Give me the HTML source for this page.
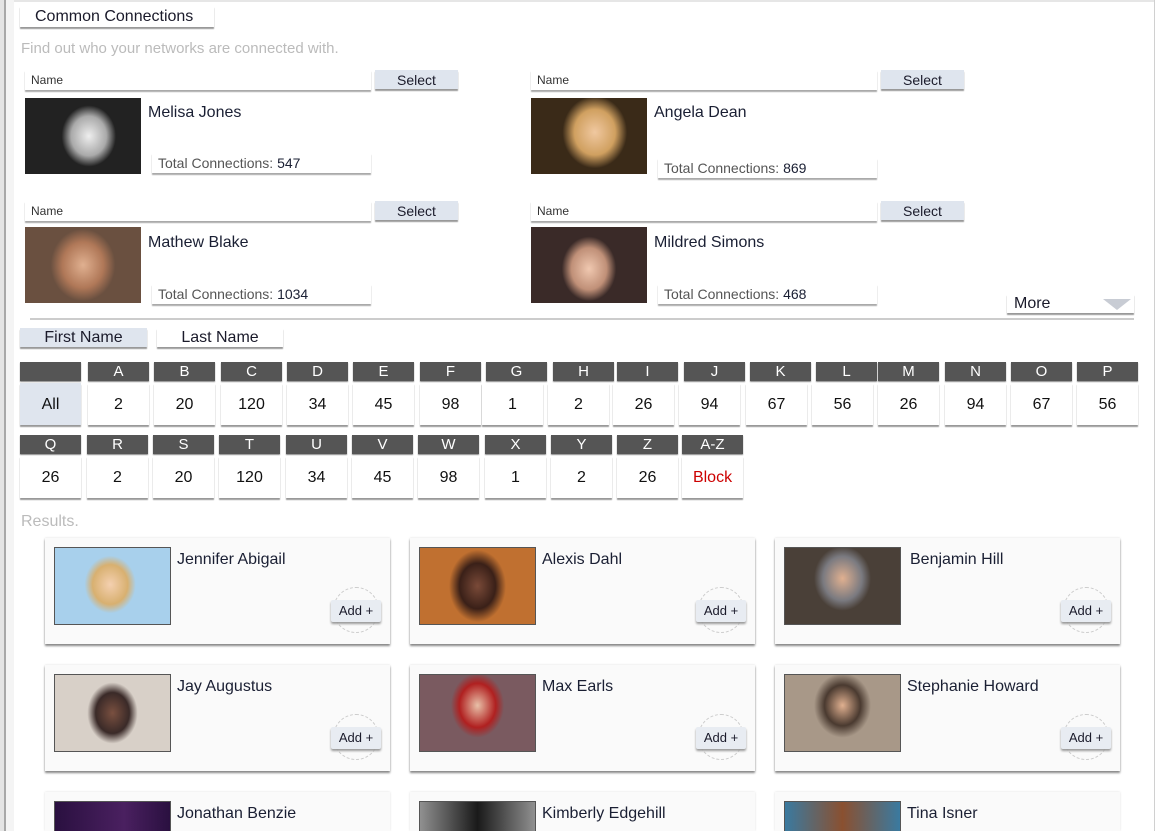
<!DOCTYPE html>
<html style="width:1158px;height:831px;overflow:hidden"><head><meta charset="utf-8"><style>
*{margin:0;padding:0;box-sizing:border-box}
body{width:1158px;height:831px;overflow:hidden;background:#fff;font-family:"Liberation Sans",Arial,sans-serif;position:relative;color:#1a1a2a}
.a{position:absolute}
.lb{left:0;top:0;width:6px;height:831px;background:#e4e4e4;border-right:2px solid #a8a8a8}
.lb2{left:6px;top:0;width:8px;height:831px;background:#f4f4f4}
.rb{left:1154px;top:0;width:1px;height:831px;background:#d0d0d0}
.tb{left:14px;top:0;width:1140px;height:2px;background:#e6e6e6}
.btn{position:absolute;background:#fff;box-shadow:0 2px 1px #999;font-size:16px;text-align:center}
.sel{background:#dfe5ee}
.inp{position:absolute;background:#fff;box-shadow:0 2px 1px #aaa;font-size:12px;padding-left:6px;line-height:20px;color:#333}
.nm{position:absolute;font-size:16px;color:#1a1f33}
.tc{position:absolute;background:#fff;box-shadow:0 2px 1px #aaa;font-size:14px;color:#555;padding-left:6px;line-height:20px}
.tc b{font-weight:normal;color:#1a1f33}
.ph{position:absolute;overflow:hidden}
.h{position:absolute;height:19px;background:#555;color:#fff;font-size:15px;text-align:center;line-height:20px;box-shadow:0 1px 1px #888}
.c{position:absolute;height:42px;background:#fff;font-size:16px;text-align:center;line-height:44px;box-shadow:0 2px 1px #999;color:#111}
.card{position:absolute;width:345px;height:106px;background:#fafafa;box-shadow:0 2px 2px #888, 0 0 2px #ddd;overflow:hidden}
.card.last{height:39px;box-shadow:0 0 2px #ddd}
.card .p{position:absolute;left:9px;top:9px;width:117px;height:78px;border:1px solid #555;overflow:hidden}
.card .n{position:absolute;left:132px;top:13px;font-size:16px;color:#1a1f33}
.add{position:absolute;left:286px;top:62px;width:50px;height:22px;background:#e8ecf2;font-size:13px;line-height:22px;text-align:center;box-shadow:0 2px 2px #999;border-radius:2px}
.ring{position:absolute;left:288px;top:49px;width:46px;height:46px;border-radius:50%;border:1px dashed #ccc}
</style></head><body>
<div class="a lb"></div><div class="a lb2"></div><div class="a rb"></div><div class="a tb"></div>

<div class="btn" style="left:20px;top:6px;width:194px;height:21px;line-height:22px;text-align:left;padding-left:15px">Common Connections</div>
<div class="a" style="left:21px;top:40px;font-size:15px;color:#bbb">Find out who your networks are connected with.</div>

<div class="inp" style="left:25px;top:70px;width:346px">Name</div>
<div class="btn sel" style="left:375px;top:70px;width:83px;height:19px;line-height:20px;font-size:14px">Select</div>
<div class="ph" style="left:25px;top:98px;width:116px;height:76px;background:radial-gradient(ellipse 32px 36px at 55% 50%,#eee,#aaa 55%,#222 85%)"></div>
<div class="nm" style="left:148px;top:104px">Melisa Jones</div>
<div class="tc" style="left:152px;top:153px;width:219px">Total Connections: <b>547</b></div>

<div class="inp" style="left:531px;top:70px;width:346px">Name</div>
<div class="btn sel" style="left:881px;top:70px;width:83px;height:19px;line-height:20px;font-size:14px">Select</div>
<div class="ph" style="left:531px;top:98px;width:116px;height:76px;background:radial-gradient(ellipse 34px 38px at 55% 45%,#f0c8a0,#d0a060 60%,#3a2a18 95%)"></div>
<div class="nm" style="left:654px;top:104px">Angela Dean</div>
<div class="tc" style="left:658px;top:158px;width:219px">Total Connections: <b>869</b></div>

<div class="inp" style="left:25px;top:201px;width:346px">Name</div>
<div class="btn sel" style="left:375px;top:201px;width:83px;height:19px;line-height:20px;font-size:14px">Select</div>
<div class="ph" style="left:25px;top:227px;width:116px;height:76px;background:radial-gradient(ellipse 34px 38px at 50% 50%,#e0b090,#b07858 60%,#6a5040 95%)"></div>
<div class="nm" style="left:148px;top:234px">Mathew Blake</div>
<div class="tc" style="left:152px;top:284px;width:219px">Total Connections: <b>1034</b></div>

<div class="inp" style="left:531px;top:201px;width:346px">Name</div>
<div class="btn sel" style="left:881px;top:201px;width:83px;height:19px;line-height:20px;font-size:14px">Select</div>
<div class="ph" style="left:531px;top:227px;width:116px;height:76px;background:radial-gradient(ellipse 32px 38px at 50% 55%,#f0c8b0,#c09078 55%,#3a2a28 85%)"></div>
<div class="nm" style="left:654px;top:234px">Mildred Simons</div>
<div class="tc" style="left:658px;top:284px;width:219px">Total Connections: <b>468</b></div>

<div class="btn" style="left:1007px;top:294px;width:127px;height:19px;line-height:20px;text-align:left;padding-left:7px">More
<svg class="a" style="left:96px;top:4px" width="28" height="12"><path d="M0 1 L28 1 L14 12 Z" fill="#c8ccd4"/></svg></div>
<div class="a" style="left:30px;top:318px;width:1104px;height:2px;background:#ccc"></div>

<div class="btn sel" style="left:20px;top:328px;width:127px;height:19px;line-height:20px">First Name</div>
<div class="btn" style="left:157px;top:328px;width:126px;height:19px;line-height:20px">Last Name</div>

<div class="h" style="left:20px;top:362px;width:61px"></div><div class="c sel" style="left:20px;top:383px;width:61px;background:#dfe5ee">All</div>
<div class="h" style="left:88px;top:362px;width:61px">A</div><div class="c" style="left:88px;top:383px;width:61px">2</div>
<div class="h" style="left:154px;top:362px;width:61px">B</div><div class="c" style="left:154px;top:383px;width:61px">20</div>
<div class="h" style="left:221px;top:362px;width:61px">C</div><div class="c" style="left:221px;top:383px;width:61px">120</div>
<div class="h" style="left:287px;top:362px;width:61px">D</div><div class="c" style="left:287px;top:383px;width:61px">34</div>
<div class="h" style="left:353px;top:362px;width:61px">E</div><div class="c" style="left:353px;top:383px;width:61px">45</div>
<div class="h" style="left:420px;top:362px;width:61px">F</div><div class="c" style="left:420px;top:383px;width:61px">98</div>
<div class="h" style="left:486px;top:362px;width:61px">G</div><div class="c" style="left:482px;top:383px;width:61px">1</div>
<div class="h" style="left:553px;top:362px;width:61px">H</div><div class="c" style="left:548px;top:383px;width:61px">2</div>
<div class="h" style="left:617px;top:362px;width:61px">I</div><div class="c" style="left:613px;top:383px;width:61px">26</div>
<div class="h" style="left:684px;top:362px;width:61px">J</div><div class="c" style="left:679px;top:383px;width:61px">94</div>
<div class="h" style="left:750px;top:362px;width:61px">K</div><div class="c" style="left:746px;top:383px;width:61px">67</div>
<div class="h" style="left:816px;top:362px;width:61px">L</div><div class="c" style="left:812px;top:383px;width:61px">56</div>
<div class="h" style="left:878px;top:362px;width:61px">M</div><div class="c" style="left:878px;top:383px;width:61px">26</div>
<div class="h" style="left:945px;top:362px;width:61px">N</div><div class="c" style="left:945px;top:383px;width:61px">94</div>
<div class="h" style="left:1011px;top:362px;width:61px">O</div><div class="c" style="left:1011px;top:383px;width:61px">67</div>
<div class="h" style="left:1077px;top:362px;width:61px">P</div><div class="c" style="left:1077px;top:383px;width:61px">56</div>

<div class="h" style="left:20px;top:435px;width:61px">Q</div><div class="c" style="left:20px;top:456px;width:61px">26</div>
<div class="h" style="left:87px;top:435px;width:61px">R</div><div class="c" style="left:87px;top:456px;width:61px">2</div>
<div class="h" style="left:153px;top:435px;width:61px">S</div><div class="c" style="left:153px;top:456px;width:61px">20</div>
<div class="h" style="left:219px;top:435px;width:61px">T</div><div class="c" style="left:219px;top:456px;width:61px">120</div>
<div class="h" style="left:286px;top:435px;width:61px">U</div><div class="c" style="left:286px;top:456px;width:61px">34</div>
<div class="h" style="left:352px;top:435px;width:61px">V</div><div class="c" style="left:352px;top:456px;width:61px">45</div>
<div class="h" style="left:418px;top:435px;width:61px">W</div><div class="c" style="left:418px;top:456px;width:61px">98</div>
<div class="h" style="left:485px;top:435px;width:61px">X</div><div class="c" style="left:485px;top:456px;width:61px">1</div>
<div class="h" style="left:551px;top:435px;width:61px">Y</div><div class="c" style="left:551px;top:456px;width:61px">2</div>
<div class="h" style="left:617px;top:435px;width:61px">Z</div><div class="c" style="left:617px;top:456px;width:61px">26</div>
<div class="h" style="left:682px;top:435px;width:61px">A-Z</div><div class="c" style="left:682px;top:456px;width:61px;color:#c00">Block</div>

<div class="a" style="left:21px;top:513px;font-size:16px;color:#bbb">Results.</div>

<div class="card" style="left:45px;top:538px"><div class="p" style="background:radial-gradient(ellipse 32px 36px at 48% 48%,#f4d0b0,#d8b070 55%,#a8d0ec 80%)"></div><div class="n">Jennifer Abigail</div><div class="ring"></div><div class="add">Add +</div></div>
<div class="card" style="left:410px;top:538px"><div class="p" style="background:radial-gradient(ellipse 30px 38px at 50% 50%,#7a4a38,#3a2018 60%,#c07030 95%)"></div><div class="n">Alexis Dahl</div><div class="ring"></div><div class="add">Add +</div></div>
<div class="card" style="left:775px;top:538px"><div class="p" style="background:radial-gradient(ellipse 30px 34px at 50% 40%,#e0b090,#7a7a80 65%,#4a4038 95%)"></div><div class="n" style="left:135px">Benjamin Hill</div><div class="ring"></div><div class="add">Add +</div></div>

<div class="card" style="left:45px;top:665px"><div class="p" style="background:radial-gradient(ellipse 28px 34px at 50% 50%,#7a5040,#3a2a28 60%,#d8d0c8 90%)"></div><div class="n">Jay Augustus</div><div class="ring"></div><div class="add">Add +</div></div>
<div class="card" style="left:410px;top:665px"><div class="p" style="background:radial-gradient(ellipse 28px 34px at 50% 40%,#e8c0a8,#b02020 65%,#7a5a60 95%)"></div><div class="n">Max Earls</div><div class="ring"></div><div class="add">Add +</div></div>
<div class="card" style="left:775px;top:665px"><div class="p" style="background:radial-gradient(ellipse 30px 34px at 50% 40%,#e0b090,#4a3a30 60%,#a89888 95%)"></div><div class="n">Stephanie Howard</div><div class="ring"></div><div class="add">Add +</div></div>

<div class="card last" style="left:45px;top:792px"><div class="p" style="height:30px;border-bottom:0;background:linear-gradient(90deg,#2a1040,#4a2060 60%,#2a1040)"></div><div class="n">Jonathan Benzie</div></div>
<div class="card last" style="left:410px;top:792px"><div class="p" style="height:30px;border-bottom:0;background:linear-gradient(90deg,#909090,#1a1a1a 50%,#909090)"></div><div class="n">Kimberly Edgehill</div></div>
<div class="card last" style="left:775px;top:792px"><div class="p" style="height:30px;border-bottom:0;background:linear-gradient(90deg,#3a7aa0,#8a5030 50%,#3a7aa0)"></div><div class="n">Tina Isner</div></div>
</body></html>
